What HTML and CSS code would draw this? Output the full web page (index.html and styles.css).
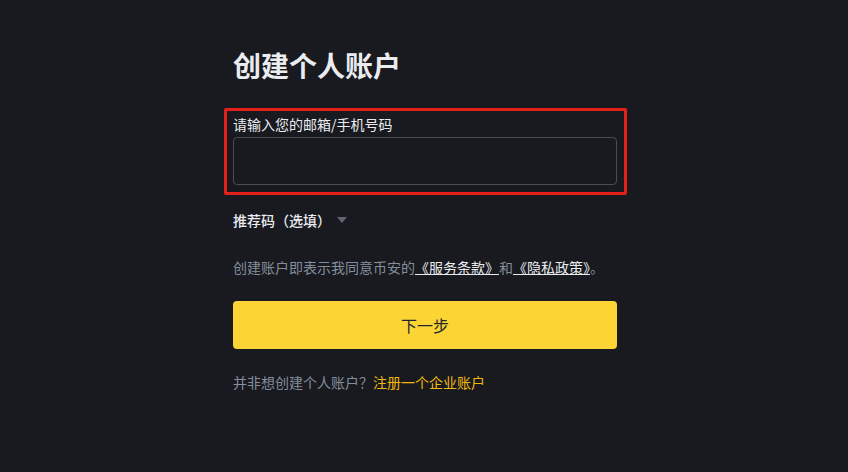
FILE: index.html
```html
<!DOCTYPE html>
<html lang="zh-CN">
<head>
<meta charset="utf-8">
<title>创建个人账户</title>
<link rel="stylesheet" href="styles.css">
</head>
<body>
<main class="page">
  <div class="form">
    <h1 class="title">创建个人账户</h1>
    <div class="field-highlight">
      <label class="field-label" for="account">请输入您的邮箱/手机号码</label>
      <input class="field-input" id="account" type="text">
    </div>
    <div class="referral">
      <span class="referral-label">推荐码（选填）</span>
      <svg class="caret" width="10" height="6" viewBox="0 0 10 6" aria-hidden="true"><path d="M0 0h10L5 6z" fill="#5e6673"/></svg>
    </div>
    <p class="terms">创建账户即表示我同意币安的<a class="terms-link" href="#">《服务条款》</a>和<a class="terms-link" href="#">《隐私政策》</a>。</p>
    <button class="next-btn" type="button">下一步</button>
    <p class="alt">并非想创建个人账户？<a class="alt-link" href="#">注册一个企业账户</a></p>
  </div>
</main>
</body>
</html>
```

FILE: styles.css
```css
html, body {
  margin: 0;
  padding: 0;
  background: #181a20;
}
body {
  width: 848px;
  height: 472px;
  overflow: hidden;
  font-family: "Noto Sans CJK SC", "Noto Sans", sans-serif;
  color: #eaecef;
}
.page {
  display: flex;
  justify-content: center;
}
.form {
  width: 384px;
  padding-left: 2px;
  display: flex;
  flex-direction: column;
}
.title {
  margin: 47px 0 0 0;
  font-size: 28px;
  line-height: 36px;
  font-weight: 700;
  color: #eaecef;
}
.field-highlight {
  margin: 25px -10px 0 -9px;
  border: 3px solid #e3201c;
  border-radius: 2px;
  padding: 3px 7px 7px 6px;
  display: flex;
  flex-direction: column;
  gap: 3px;
}
.field-label {
  font-size: 14px;
  line-height: 20px;
  color: #eaecef;
}
.field-input {
  box-sizing: border-box;
  width: 384px;
  height: 48px;
  margin: 0;
  border: 1px solid #474d57;
  border-radius: 4px;
  background: transparent;
  color: #eaecef;
  font: inherit;
  padding: 0 12px;
  outline: none;
}
.referral {
  margin-top: 15px;
  display: flex;
  align-items: center;
  gap: 6px;
  height: 20px;
}
.referral-label {
  font-size: 14px;
  line-height: 20px;
  font-weight: 500;
  color: #eaecef;
}
.caret {
  display: block;
}
.terms {
  margin: 27px 0 0 0;
  font-size: 14px;
  line-height: 20px;
  color: #848e9c;
}
.terms-link {
  color: #eaecef;
  text-decoration: underline;
}
.next-btn {
  margin-top: 24px;
  width: 384px;
  height: 48px;
  border: none;
  border-radius: 4px;
  background: #fcd535;
  color: #202630;
  font-family: inherit;
  font-size: 16px;
  font-weight: 400;
  padding: 0;
}
.alt {
  margin: 23px 0 0 0;
  font-size: 14px;
  line-height: 20px;
  color: #848e9c;
}
.alt-link {
  color: #f0b90b;
  text-decoration: none;
}
```
